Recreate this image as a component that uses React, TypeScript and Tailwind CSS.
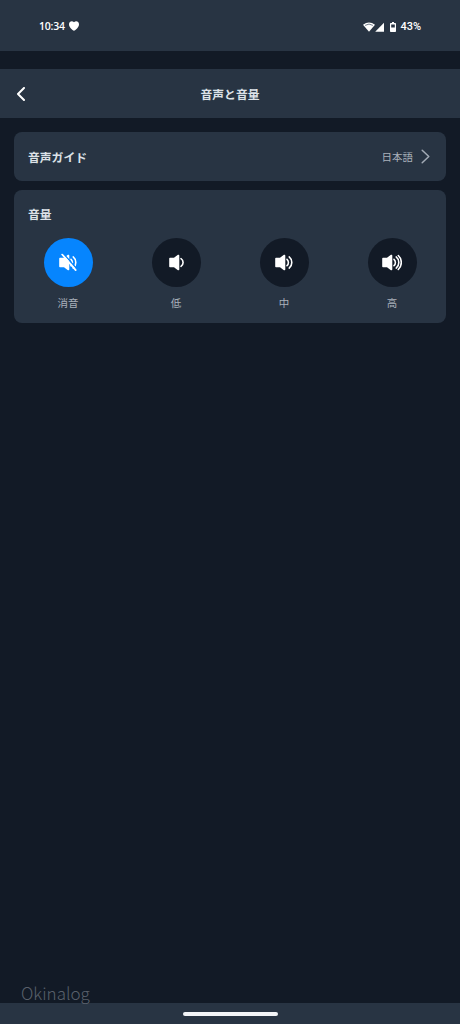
import { useState } from "react";

type Level = "mute" | "low" | "mid" | "high";

const levels: { id: Level; label: string }[] = [
  { id: "mute", label: "消音" },
  { id: "low", label: "低" },
  { id: "mid", label: "中" },
  { id: "high", label: "高" },
];

// number of sound waves next to the speaker, and the width of the icon
const waves: Record<Level, number> = { mute: 2, low: 1, mid: 2, high: 3 };
const widths: Record<Level, number> = { mute: 18, low: 15, mid: 18, high: 20 };

function SpeakerIcon({ level }: { level: Level }) {
  const count = waves[level];

  return (
    <svg
      width={widths[level]}
      height="18"
      viewBox={`0 0 ${widths[level]} 18`}
      fill="none"
      stroke="currentColor"
      strokeWidth="1.6"
      strokeLinecap="round"
      className="-translate-y-[0.5px]"
    >
      <path
        d="M1 4.2h4l3.6-2.7c.8-.5 1.7-.1 1.7.8v13.4c0 .9-.9 1.3-1.7.8L5 13.8H1c-.5 0-.8-.3-.8-.8V5c0-.5.3-.8.8-.8Z"
        fill="currentColor"
        stroke="none"
      />
      <path d={count === 1 ? "M12 5.2q2.1 1.4 2.1 3.8t-2.1 3.8" : "M12 5.8q1.4 1.2 1.4 3.2t-1.4 3.2"} />
      {count > 1 && <path d="M14.2 3.4q2.6 2.1 2.6 5.6t-2.6 5.6" />}
      {count > 2 && <path d="M16.3 2q3 2.7 3 7t-3 7" />}
      {level === "mute" && (
        <>
          <path d="M4.6 .4 18 15.6" className="stroke-[#0685fe]" strokeWidth="1.4" />
          <path d="m3.2 1 13.5 15.6" strokeWidth="1.8" />
        </>
      )}
    </svg>
  );
}

function StatusBar() {
  return (
    <div className="flex h-[51px] items-center justify-between bg-[#283443] px-[39px] font-['Roboto',sans-serif] text-[11px] font-medium text-white">
      <div className="flex items-center gap-1 pt-px">
        <span className="font-['Open_Sans','Noto_Sans',sans-serif] text-[10.5px] leading-4 font-semibold tracking-[-0.2px]">
          10:34
        </span>
        <svg width="10" height="10" viewBox="0 0 10 10" fill="currentColor">
          <path d="M5 9.8C3.5 9 0 6.4 0 3.2 0 .2 3.3-.8 5 1.2 6.7-.8 10 .2 10 3.2 10 6.4 6.5 9 5 9.8Z" />
        </svg>
      </div>
      <div className="flex items-center pt-0.5">
        <svg width="12" height="10" viewBox="0 0 12 10" fill="currentColor">
          <path d="M0 2.8Q6-2 12 2.8L6 9.8Z" />
          <path d="M2.1 3.4Q6 .7 9.9 3.4" fill="none" className="stroke-[#6f7a88]" strokeWidth="1" />
        </svg>
        <svg width="9" height="10" viewBox="0 0 9 10" fill="currentColor">
          <path d="M9 .7v9H.2Z" />
        </svg>
        <svg width="6" height="10" viewBox="0 0 6 10" fill="currentColor" className="ml-1.5">
          <path
            fillRule="evenodd"
            d="M2 0h2v1h1.2c.5 0 .8.3.8.8v7.4c0 .5-.3.8-.8.8H.8c-.5 0-.8-.3-.8-.8V1.8C0 1.3.3 1 .8 1H2Zm-.8 2.6v3h3.6v-3Z"
          />
        </svg>
        <span className="ml-1 leading-4">43%</span>
      </div>
    </div>
  );
}

export default function App() {
  const [volume, setVolume] = useState<Level>("mute");

  return (
    <div className="relative flex h-screen w-full flex-col bg-[#121a26] font-['Noto_Sans_CJK_JP',sans-serif] text-[#dde2e8]">
      <StatusBar />

      <header className="mt-[18px] grid h-[49px] grid-cols-[1fr_auto_1fr] items-center bg-[#283443] px-4">
        <button aria-label="戻る" className="w-fit text-white">
          <svg width="10" height="14" viewBox="0 0 10 14" fill="none" stroke="currentColor" strokeWidth="2" strokeLinecap="round" strokeLinejoin="round">
            <path d="M8 1 2 7l6 6" />
          </svg>
        </button>
        <h1 className="text-[11.8px] leading-4 font-bold">音声と音量</h1>
      </header>

      <main className="flex flex-1 flex-col gap-[9px] px-3.5 pt-3.5">
        <button className="flex h-[49px] items-center rounded-lg bg-[#283443] pr-4 pl-3.5">
          <span className="text-[11.8px] leading-4 font-bold">音声ガイド</span>
          <span className="ml-auto text-[10.5px] leading-4 text-[#aab1bb]">日本語</span>
          <svg width="9" height="15" viewBox="0 0 9 15" fill="none" stroke="currentColor" strokeWidth="1.5" strokeLinecap="round" strokeLinejoin="round" className="ml-2 text-[#a3abb6]">
            <path d="m1.2 1.2 6.6 6.3-6.6 6.3" />
          </svg>
        </button>

        <section className="h-[133px] rounded-lg bg-[#283443] pt-4">
          <h2 className="pl-3.5 text-[11.8px] leading-4 font-bold">音量</h2>
          <div className="mt-4 grid grid-cols-4">
            {levels.map((item) => (
              <button
                key={item.id}
                onClick={() => setVolume(item.id)}
                className="flex flex-col items-center"
              >
                <span
                  className={`flex size-[49px] items-center justify-center rounded-full text-white ${
                    volume === item.id ? "bg-[#0685fe]" : "bg-[#121a26]"
                  }`}
                >
                  <SpeakerIcon level={item.id} />
                </span>
                <span className="mt-2 text-[10.5px] leading-4 text-[#aab1bb]">{item.label}</span>
              </button>
            ))}
          </div>
        </section>
      </main>

      <footer className="flex h-[21px] items-center justify-center bg-[#283443]">
        <div className="h-1 w-[95px] rounded-full bg-[#f3f5f8]" />
      </footer>

      <span className="absolute bottom-[19px] left-[21px] text-[17px] leading-6 font-light text-[#59606b]">
        Okinalog
      </span>
    </div>
  );
}
